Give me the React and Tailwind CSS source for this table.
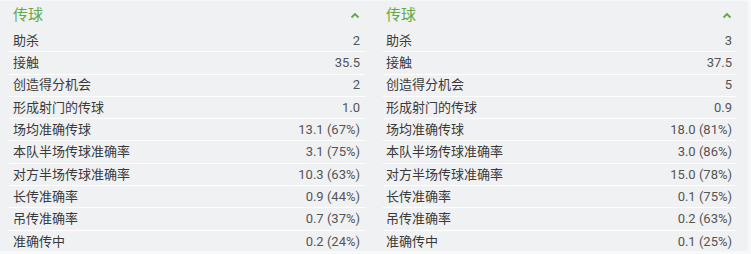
import React from 'react'

const home = [
  ['助杀', '2'],
  ['接触', '35.5'],
  ['创造得分机会', '2'],
  ['形成射门的传球', '1.0'],
  ['场均准确传球', '13.1 (67%)'],
  ['本队半场传球准确率', '3.1 (75%)'],
  ['对方半场传球准确率', '10.3 (63%)'],
  ['长传准确率', '0.9 (44%)'],
  ['吊传准确率', '0.7 (37%)'],
  ['准确传中', '0.2 (24%)'],
]

const away = [
  ['助杀', '3'],
  ['接触', '37.5'],
  ['创造得分机会', '5'],
  ['形成射门的传球', '0.9'],
  ['场均准确传球', '18.0 (81%)'],
  ['本队半场传球准确率', '3.0 (86%)'],
  ['对方半场传球准确率', '15.0 (78%)'],
  ['长传准确率', '0.1 (75%)'],
  ['吊传准确率', '0.2 (63%)'],
  ['准确传中', '0.1 (25%)'],
]

function Chevron() {
  return (
    <svg width="10" height="7" viewBox="0 0 10 7" fill="none">
      <path d="M1.5 5.5 L5 2 L8.5 5.5" stroke="#5fa844" strokeWidth="1.8" />
    </svg>
  )
}

function Panel({ rows, className, pad }) {
  return (
    <div className={className}>
      <div className={'h-[29px] flex items-center justify-between text-[15px] text-[#63aa47] ' + pad}>
        <span>传球</span>
        <Chevron />
      </div>
      {rows.map(([label, value], i) => (
        <div
          key={label}
          className={
            'h-[22.3px] flex items-center justify-between text-[13px] ' +
            pad +
            (i < rows.length - 1 ? ' border-b border-white' : '')
          }
        >
          <span className="text-[#3a3a3a]">{label}</span>
          <span className="text-[#555]">{value}</span>
        </div>
      ))}
    </div>
  )
}

export default function App() {
  return (
    <div
      className="w-[751px] h-[254px] bg-[#f7f8fa] overflow-hidden"
      style={{ fontFamily: 'Roboto, "Noto Sans CJK SC", sans-serif' }}
    >
      <div className="w-[748px] h-[251px] bg-[#f0f1f3] border-t border-[#f6f7f9] flex">
        <Panel rows={home} className="ml-[9px] w-[356px]" pad="pl-[4px] pr-[5px]" />
        <Panel rows={away} className="ml-[18px] w-[353px]" pad="pl-[3px] pr-[4px]" />
      </div>
    </div>
  )
}
